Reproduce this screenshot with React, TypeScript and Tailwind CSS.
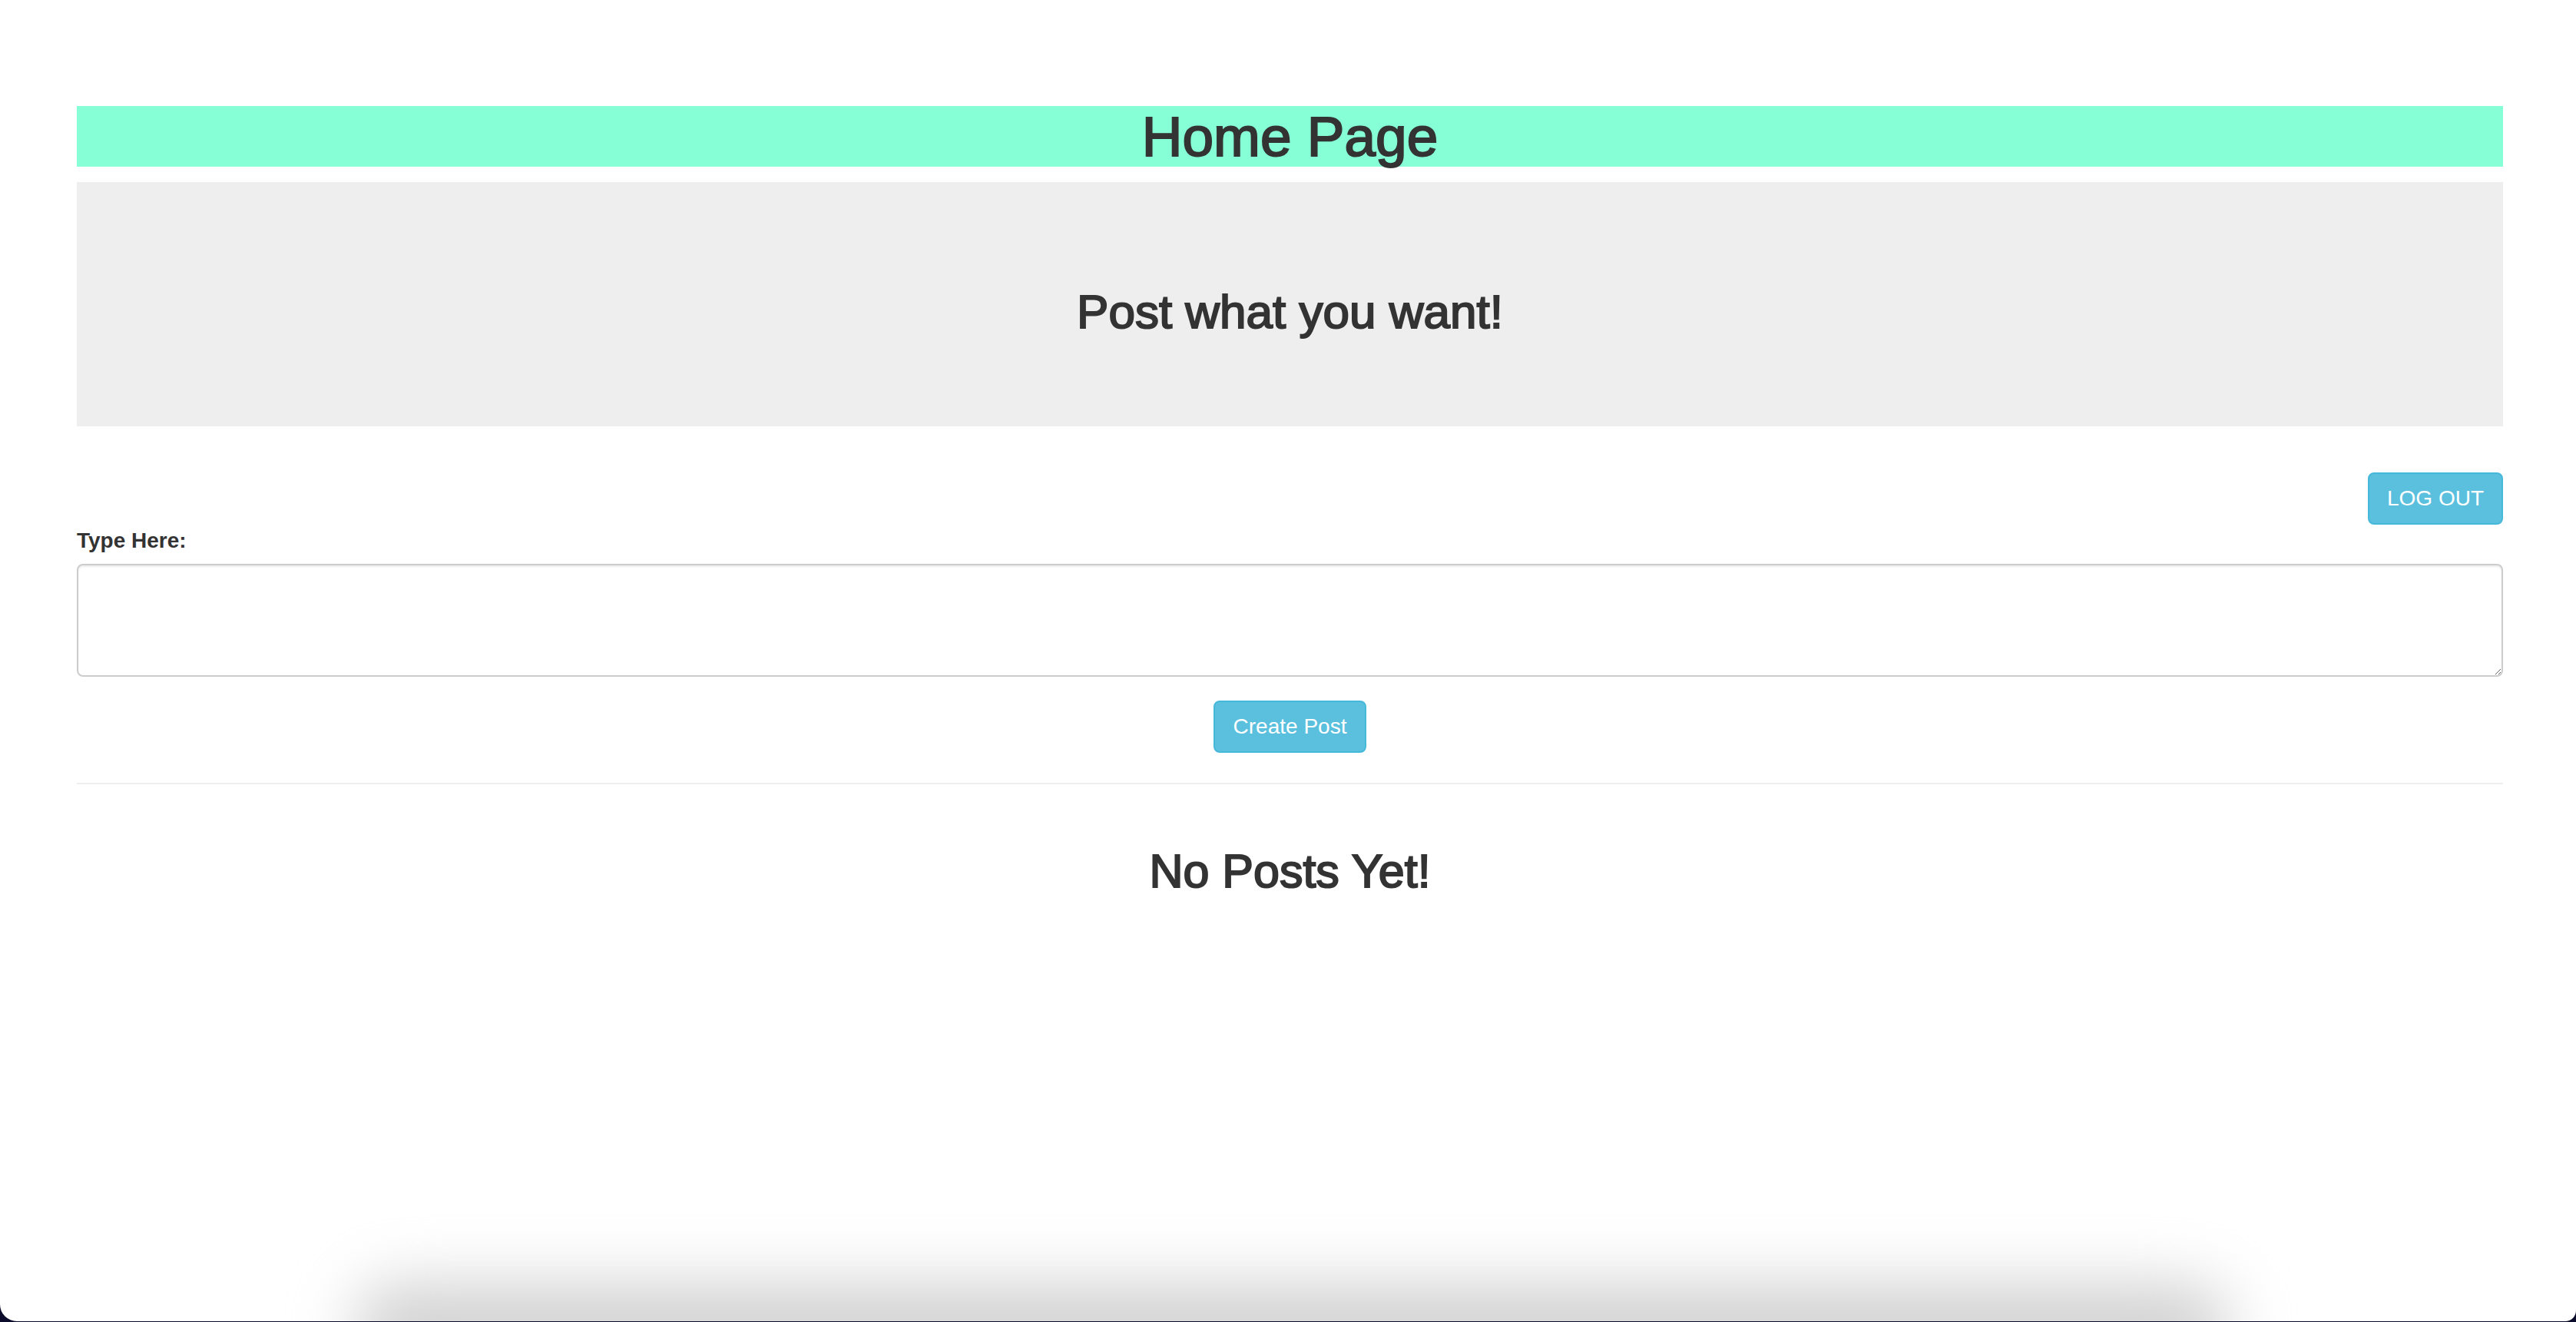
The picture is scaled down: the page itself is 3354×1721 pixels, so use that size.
import React from "react";

const font = { fontFamily: '"Liberation Sans", Arial, Helvetica, sans-serif' };

export default function App() {
  return (
    <div className="w-[3354px] h-[1721px] bg-[#0b0b2c]" style={font}>
      <div className="relative h-[1720px] bg-white overflow-hidden rounded-bl-[22px] rounded-br-[14px] text-[#333]">
        <div className="pl-[100px] pr-[95px] pt-[138px]">
          <h1 className="m-0 bg-[#86ffd6] text-center text-[73px] leading-[79px] [-webkit-text-stroke:2px_#333]">
            Home Page
          </h1>
          <div className="mt-[20px] bg-[#eeeeee] pt-[96px] pb-[96px]">
            <h2 className="mt-[40px] mb-[20px] text-center text-[62px] leading-[66px] [-webkit-text-stroke:2px_#333]">
              Post what you want!
            </h2>
          </div>
          <div className="mt-[60px] flex justify-end">
            <button className="h-[68px] px-[23px] rounded-[8px] bg-[#5bc0de] border-2 border-[#46b8da] text-white text-[28px] leading-[40px]">
              LOG OUT
            </button>
          </div>
          <label className="block mt-[1px] mb-[10px] text-[28px] leading-[40px] font-bold">Type Here:</label>
          <textarea
            className="block w-full h-[147px] rounded-[8px] border-2 border-[#cccccc] px-[24px] py-[12px] text-[28px] shadow-[inset_0_2px_2px_rgba(0,0,0,0.075)] outline-none resize-y"
          />
          <div className="mt-[31px] flex justify-center">
            <button className="h-[68px] px-[24px] rounded-[8px] bg-[#5bc0de] border-2 border-[#46b8da] text-white text-[28px] leading-[40px]">
              Create Post
            </button>
          </div>
          <hr className="mt-[39px] mb-[40px] border-0 border-t-2 border-[#eeeeee]" />
          <div className="flow-root">
            <h2 className="mt-[40px] mb-[20px] text-center text-[61px] leading-[66px] [-webkit-text-stroke:2px_#333]">
              No Posts Yet!
            </h2>
          </div>
        </div>
        <div className="absolute left-[460px] right-[450px] bottom-[-70px] h-[120px] bg-[#d2d2d2] blur-[40px] rounded-[60px]" />
      </div>
    </div>
  );
}
